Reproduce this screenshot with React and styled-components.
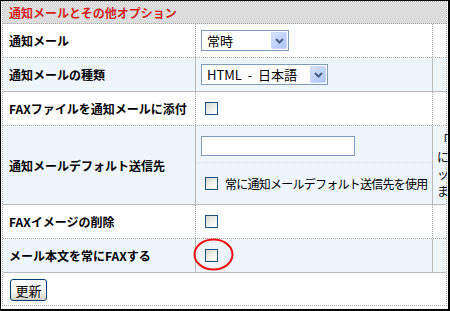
import React from 'react';
import styled, {createGlobalStyle, css} from 'styled-components';

const GlobalStyle = createGlobalStyle`
  html, body {
    margin: 0;
    padding: 0;
    background: #fff;
  }
  body {
    font-family: "Noto Sans CJK JP", "Liberation Sans", sans-serif;
    font-size: 12px;
    color: #000;
  }
`;

const Frame = styled.div`
  position: relative;
  width: 450px;
  height: 311px;
  box-sizing: border-box;
  border-style: solid;
  border-color: #000;
  border-width: 1px 2px 2px 1px;
  padding: 0 1px 3px 1px;
  overflow: hidden;
  background: #fff;
`;

const Panel = styled.div`
  position: relative;
  height: 100%;
  box-sizing: border-box;
  border: 1px dotted #a8a8a8;
`;

const Header = styled.div`
  height: 21px;
  line-height: 21px;
  padding-left: 6px;
  background: #dcdcdc;
  border-bottom: 1px dotted #a8a8a8;
  color: #d42323;
  font-weight: bold;
  font-size: 12px;
`;

const Row = styled.div`
  display: grid;
  grid-template-columns: 192px 237px 1fr;
  height: ${({$height}) => $height || 34}px;
  box-sizing: border-box;
  background: ${({$shaded}) => ($shaded ? '#eef5fb' : '#fff')};
  border-bottom: ${({$shaded}) => ($shaded ? '1px solid #b9b9b9' : '1px dotted #a8a8a8')};
`;

const cellBorder = css`
  border-left: ${({$shaded}) => ($shaded ? '1px solid #b9b9b9' : '1px dotted #a8a8a8')};
`;

const Label = styled.div`
  display: flex;
  align-items: center;
  padding-left: 6px;
  font-weight: bold;
  font-size: 12px;
  white-space: nowrap;
`;

const Value = styled.div`
  ${cellBorder};
  position: relative;
  display: flex;
  flex-direction: ${({$stack}) => ($stack ? 'column' : 'row')};
  align-items: ${({$stack}) => ($stack ? 'stretch' : 'center')};
  padding-left: 5px;
  box-sizing: border-box;
`;

const Note = styled.div`
  ${cellBorder};
  display: flex;
  align-items: center;
  padding-left: 4px;
  font-size: 12px;
  line-height: 17px;
  white-space: nowrap;
`;

const SubRow = styled.div`
  display: flex;
  align-items: ${({$top}) => ($top ? 'flex-start' : 'center')};
  height: ${({$height}) => $height}px;
  box-sizing: border-box;
  padding-top: ${({$top}) => ($top ? 10 : 0)}px;
  border-bottom: ${({$line}) => ($line ? '1px dotted #d3dfea' : 'none')};
  margin-left: -5px;
  padding-left: 5px;
`;

const SelectBox = styled.div`
  display: flex;
  align-items: center;
  width: ${({$width}) => $width}px;
  height: 21px;
  box-sizing: border-box;
  border: 1px solid #7f9db9;
  background: #fff;
  padding: 0 1px 0 5px;
  font-size: 13px;
`;

const SelectText = styled.span`
  flex: 1;
  white-space: pre;
`;

const ArrowButton = styled.span`
  display: flex;
  align-items: center;
  justify-content: center;
  width: 16px;
  height: 17px;
  box-sizing: border-box;
  border: 1px solid #c9d8fc;
  border-radius: 1px;
  background: linear-gradient(135deg, #d6e2fe 0%, #bccffa 60%, #b2c6f6 100%);
`;

const TextInput = styled.input`
  width: 154px;
  height: 20px;
  box-sizing: border-box;
  border: 1px solid #7f9db9;
  margin: 0;
  padding: 1px 3px;
  font: inherit;
`;

const Checkbox = styled.span`
  display: inline-block;
  flex: none;
  width: 13px;
  height: 13px;
  margin-left: 4px;
  box-sizing: border-box;
  border: 1px solid #1c5180;
  background: linear-gradient(135deg, #d8d8d2 0%, #eeeee9 45%, #fff 100%);
`;

const CheckLabel = styled.span`
  margin-left: 7px;
  font-size: 12px;
  letter-spacing: -0.75px;
  white-space: nowrap;
`;

const Highlight = styled.svg`
  position: absolute;
  left: -4px;
  top: -1px;
  pointer-events: none;
`;

const Footer = styled.div`
  padding: 6px 0 0 7px;
`;

const Button = styled.button`
  width: 37px;
  height: 22px;
  padding: 0;
  border: 1px solid #003c74;
  border-radius: 3px;
  background: linear-gradient(180deg, #ffffff 0%, #f5f4ef 55%, #e3e0d6 85%, #d3cfc3 100%);
  font-family: inherit;
  font-size: 13px;
  color: #000;
`;

const Chevron = () => (
  <svg width="9" height="6" viewBox="0 0 9 6">
    <path d="M1 1 L4.5 4.5 L8 1" fill="none" stroke="#4d6185" strokeWidth="2" />
  </svg>
);

const Select = ({value, width}) => (
  <SelectBox $width={width}>
    <SelectText>{value}</SelectText>
    <ArrowButton><Chevron /></ArrowButton>
  </SelectBox>
);

const OptionRow = ({label, shaded, height, children, note, stack}) => (
  <Row $shaded={shaded} $height={height}>
    <Label>{label}</Label>
    <Value $shaded={shaded} $stack={stack}>{children}</Value>
    <Note $shaded={shaded}>{note}</Note>
  </Row>
);

const App = () => (
  <>
    <GlobalStyle />
    <Frame>
      <Panel>
        <Header>通知メールとその他オプション</Header>
        <OptionRow label="通知メール">
          <Select value="常時" width={88} />
        </OptionRow>
        <OptionRow label="通知メールの種類" shaded>
          <Select value="HTML  -  日本語" width={127} />
        </OptionRow>
        <OptionRow label="FAXファイルを通知メールに添付">
          <Checkbox />
        </OptionRow>
        <OptionRow
          label="通知メールデフォルト送信先"
          shaded
          height={79}
          stack
          note={(
            <div>
              「通知メールデフォルト送信先」
              <br />
              に設定したアドレスへ送信します。チェ
              <br />
              ックを外すと送信先を個別に指定でき
              <br />
              ます。
            </div>
          )}
        >
          <SubRow $top $line $height={37}>
            <TextInput type="text" />
          </SubRow>
          <SubRow $height={41}>
            <Checkbox />
            <CheckLabel>常に通知メールデフォルト送信先を使用</CheckLabel>
          </SubRow>
        </OptionRow>
        <OptionRow label="FAXイメージの削除">
          <Checkbox />
        </OptionRow>
        <OptionRow label="メール本文を常にFAXする" shaded>
          <Checkbox />
          <Highlight width="44" height="36" viewBox="0 0 44 36">
            <ellipse cx="21.5" cy="16.5" rx="19" ry="15" fill="none" stroke="#ee1111" strokeWidth="2" />
          </Highlight>
        </OptionRow>
        <Footer>
          <Button type="button">更新</Button>
        </Footer>
      </Panel>
    </Frame>
  </>
);

export default App;
